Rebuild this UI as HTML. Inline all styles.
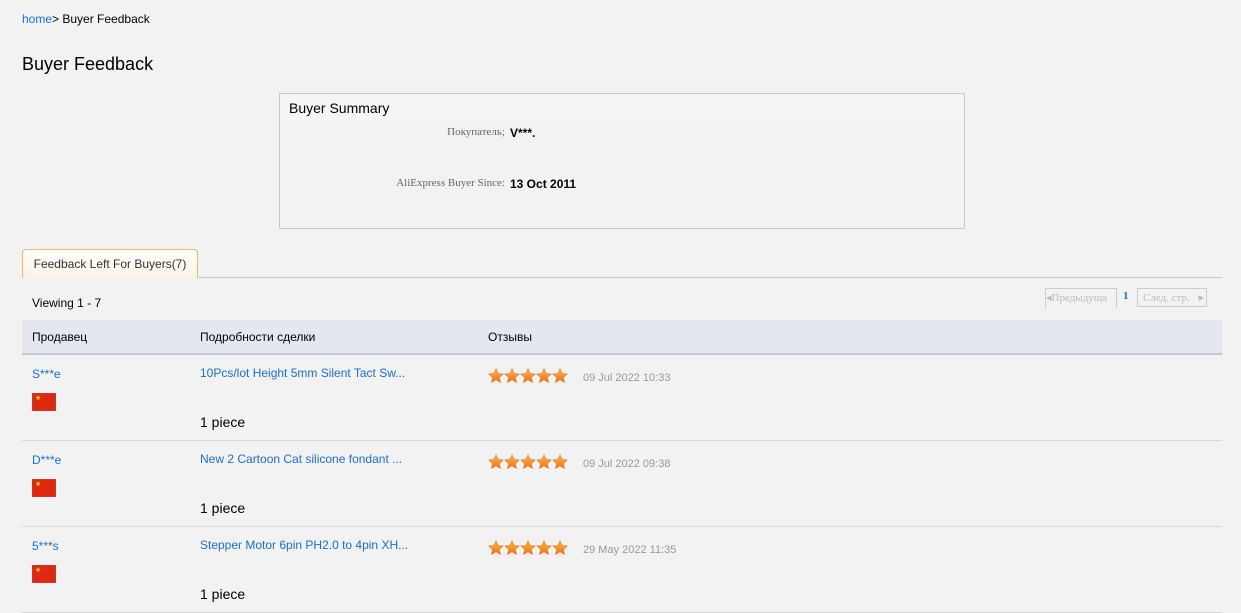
<!DOCTYPE html>
<html><head><meta charset="utf-8"><style>
body{margin:0;background:#f2f2f2;font-family:"Liberation Sans",sans-serif;font-size:12px;color:#000;width:1241px;height:607px;overflow:hidden;position:relative}
.a{position:absolute}
a{color:#1a6fd0;text-decoration:none}
.box{left:279px;top:93px;width:684px;height:134px;border:1px solid #c8c8c8}
.bh{height:26px;background:#f5f5f5;font-size:14px;padding-left:9px;line-height:28px}
.lab{font-family:"Liberation Serif",serif;color:#666;font-size:11px;text-align:right;width:225px;left:0}
.val{font-weight:bold;left:230px;font-size:12px}
.tab{left:22px;top:249px;width:174px;height:28px;border:1px solid #f0b860;border-bottom:none;border-radius:4px 4px 0 0;background:linear-gradient(#fff,#fdf1e2);text-align:center;line-height:29px;color:#333}
.line{left:22px;top:277px;width:1200px;height:1px;background:#c8c8c8}
.th{left:22px;top:320px;width:1200px;height:33px;background:#e4e7ef;border-bottom:2px solid #c4c7d6}
.row{left:22px;width:1200px;height:85px;border-bottom:1px solid #d8d8d8}
.flag{width:22px;height:16px;background:#de2910;border:1px solid #c33}
.flag:after{content:"★";position:absolute;left:2px;top:0;color:#ffde00;font-size:7px}
.pg{border:1px solid #ccc;color:#bbb;font-family:"Liberation Serif",serif;font-size:11px;height:19px;line-height:19px}
</style></head><body>
<svg width="0" height="0" style="position:absolute"><defs><linearGradient id="g" x1="0" y1="0" x2="0" y2="1"><stop offset="0" stop-color="#ffc04a"/><stop offset="1" stop-color="#f26a12"/></linearGradient><symbol id="s" viewBox="0 0 16 16"><path d="M8 0.8L10.1 5.5 15.2 6 11.3 9.4 12.5 14.5 8 11.8 3.5 14.5 4.7 9.4 0.8 6 5.9 5.5Z" fill="url(#g)" stroke="#e8741a" stroke-width="0.6"/></symbol></defs></svg>
<div class="a" style="left:22px;top:12px"><a>home</a>&gt; Buyer Feedback</div>
<div class="a" style="left:22px;top:54px;font-size:18px">Buyer Feedback</div>
<div class="a box"><div class="bh">Buyer Summary</div>
<div class="a lab" style="top:32px">Покупатель;</div><div class="a val" style="top:32px">V***.</div>
<div class="a lab" style="top:83px">AliExpress Buyer Since:</div><div class="a val" style="top:83px">13 Oct 2011</div></div>
<div class="a line"></div>
<div class="a tab">Feedback Left For Buyers(7)</div>
<div class="a" style="left:32px;top:296px">Viewing 1 - 7</div>
<div class="a pg" style="left:1045px;top:288px;width:70px;border-bottom:none;overflow:hidden;white-space:nowrap">◂Предыдуща</div>
<div class="a" style="left:1123px;top:290px;color:#1a6fd0;font-family:'Liberation Serif',serif;font-size:11px;font-weight:bold">1</div>
<div class="a pg" style="left:1137px;top:288px;width:70px;padding-left:5px;box-sizing:border-box">След. стр. <span style="margin-left:6px">▸</span></div>
<div class="a th"><span class="a" style="left:10px;top:10px">Продавец</span><span class="a" style="left:178px;top:10px">Подробности сделки</span><span class="a" style="left:466px;top:10px">Отзывы</span></div>

<div class="a row" style="top:355px"><a class="a" style="left:10px;top:12px">S***e</a><div class="a flag" style="left:10px;top:38px"></div><a class="a" style="left:178px;top:11px">10Pcs/lot Height 5mm Silent Tact Sw...</a><div class="a" style="left:178px;top:59px;font-size:14px">1 piece</div><div class="a" style="left:466px;top:13px"><svg width="80" height="16"><use href="#s" x="0" width="16" height="16"/><use href="#s" x="16" width="16" height="16"/><use href="#s" x="32" width="16" height="16"/><use href="#s" x="48" width="16" height="16"/><use href="#s" x="64" width="16" height="16"/></svg></div><div class="a" style="left:561px;top:17px;color:#999;font-size:11px">09 Jul 2022 10:33</div></div>

<div class="a row" style="top:441px"><a class="a" style="left:10px;top:12px">D***e</a><div class="a flag" style="left:10px;top:38px"></div><a class="a" style="left:178px;top:11px">New 2 Cartoon Cat silicone fondant ...</a><div class="a" style="left:178px;top:59px;font-size:14px">1 piece</div><div class="a" style="left:466px;top:13px"><svg width="80" height="16"><use href="#s" x="0" width="16" height="16"/><use href="#s" x="16" width="16" height="16"/><use href="#s" x="32" width="16" height="16"/><use href="#s" x="48" width="16" height="16"/><use href="#s" x="64" width="16" height="16"/></svg></div><div class="a" style="left:561px;top:17px;color:#999;font-size:11px">09 Jul 2022 09:38</div></div>

<div class="a row" style="top:527px"><a class="a" style="left:10px;top:12px">5***s</a><div class="a flag" style="left:10px;top:38px"></div><a class="a" style="left:178px;top:11px">Stepper Motor 6pin PH2.0 to 4pin XH...</a><div class="a" style="left:178px;top:59px;font-size:14px">1 piece</div><div class="a" style="left:466px;top:13px"><svg width="80" height="16"><use href="#s" x="0" width="16" height="16"/><use href="#s" x="16" width="16" height="16"/><use href="#s" x="32" width="16" height="16"/><use href="#s" x="48" width="16" height="16"/><use href="#s" x="64" width="16" height="16"/></svg></div><div class="a" style="left:561px;top:17px;color:#999;font-size:11px">29 May 2022 11:35</div></div>
</body></html>
